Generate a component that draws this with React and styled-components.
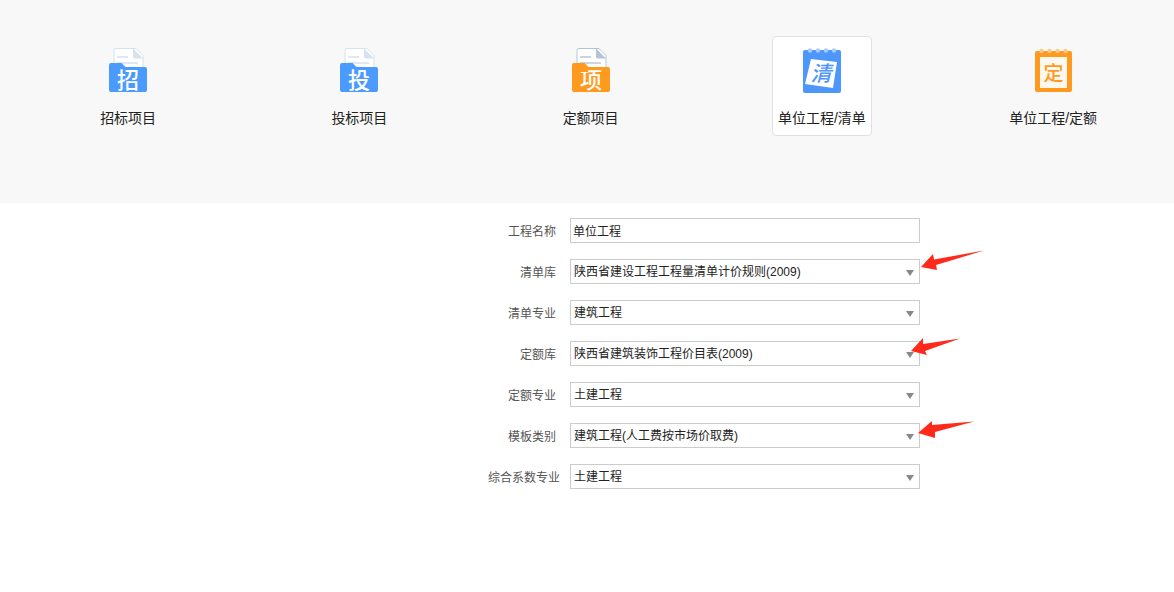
import React from 'react';
import styled, { createGlobalStyle } from 'styled-components';

const FONT = '"Liberation Sans", "Noto Sans CJK SC", sans-serif';

const GlobalStyle = createGlobalStyle`
  html, body {
    margin: 0;
    padding: 0;
    background: #fff;
    font-family: ${FONT};
  }
`;

const TYPES = [
  { label: '招标项目', icon: 'folder', char: '招', color: '#4b9bff', line: '#dfe8f3', corner: '#d5e2f0' },
  { label: '投标项目', icon: 'folder', char: '投', color: '#4b9bff', line: '#dfe8f3', corner: '#d5e2f0' },
  { label: '定额项目', icon: 'folder', char: '项', color: '#ff9a1f', line: '#cbd5df', corner: '#b4c4d4' },
  { label: '单位工程/清单', icon: 'listBook', char: '清', active: true },
  { label: '单位工程/定额', icon: 'quotaBook', char: '定' },
];

const FIELDS = [
  { label: '工程名称', value: '单位工程', input: true },
  { label: '清单库', value: '陕西省建设工程工程量清单计价规则(2009)', arrow: 'first' },
  { label: '清单专业', value: '建筑工程' },
  { label: '定额库', value: '陕西省建筑装饰工程价目表(2009)', arrow: 'second' },
  { label: '定额专业', value: '土建工程' },
  { label: '模板类别', value: '建筑工程(人工费按市场价取费)', arrow: 'third' },
  { label: '综合系数专业', value: '土建工程', wide: true },
];

const ARROWS = {
  first: { x: 349, y: -10, w: 64, h: 22, points: '2,18 14,5 15,10.5 65,1.500 17,16 18,21' },
  second: { x: 339, y: -4, w: 52, h: 20, points: '2,14 14,1 14,7 51,1.500 16,14 18,18' },
  third: { x: 346, y: -4, w: 58, h: 20, points: '2,14 16,2 16,6 58,2.500 19,13 19,19' },
};

const FolderIcon = ({ char, color, line, corner }) => (
  <svg width="40" height="44" viewBox="0 0 40 44">
    <path d="M6 2.5a2 2 0 0 1 2-2h20l7 7v20H6z" fill="#fff" stroke={corner} />
    <path d="M25 .5l10 10h-8a2 2 0 0 1-2-2z" fill={corner} />
    <rect x="9" y="8" width="11" height="2" fill={line} />
    <rect x="9" y="14" width="21" height="2" fill={line} />
    <path d="M1 17a2 2 0 0 1 2-2h10.500l4 4H37a2 2 0 0 1 2 2v21a2 2 0 0 1-2 2H3a2 2 0 0 1-2-2z" fill={color} />
    <text x="20" y="39.500" textAnchor="middle" fontSize="22" fontWeight="500" fill="#fff" fontFamily="Noto Sans CJK SC">
      {char}
    </text>
  </svg>
);

const ListBookIcon = ({ char }) => (
  <svg width="40" height="45" viewBox="0 0 40 45">
    <rect x="1" y="2" width="38" height="43" rx="2" fill="#4d96fb" />
    {[7, 15, 23, 31].map(cx => (
      <circle key={cx} cx={cx + 1} cy="2.500" r="2.200" fill="#a9ccfb" />
    ))}
    <path d="M9 11l26 3-4 26-28-4z" fill="#fff" />
    <text
      x="19"
      y="33"
      textAnchor="middle"
      fontSize="21"
      fontWeight="500"
      fontStyle="italic"
      fill="#4d96fb"
      fontFamily="Noto Sans CJK SC"
    >
      {char}
    </text>
  </svg>
);

const QuotaBookIcon = ({ char }) => (
  <svg width="40" height="45" viewBox="0 0 40 45">
    <rect x="2" y="3" width="37" height="41" rx="2" fill="#ff9a1f" />
    {[7, 15, 23, 31].map(cx => (
      <circle key={cx} cx={cx + 1.5} cy="3" r="2.200" fill="#fcc98a" />
    ))}
    <rect x="7" y="9" width="27" height="31" fill="#fff8ee" />
    <text x="20.500" y="33" textAnchor="middle" fontSize="20" fontWeight="500" fill="#ff9a1f" fontFamily="Noto Sans CJK SC">
      {char}
    </text>
  </svg>
);

const TypeIcon = ({ type }) => {
  if (type.icon === 'folder') {
    return <FolderIcon char={type.char} color={type.color} line={type.line} corner={type.corner} />;
  }
  if (type.icon === 'listBook') {
    return <ListBookIcon char={type.char} />;
  }
  return <QuotaBookIcon char={type.char} />;
};

const RedArrow = ({ name }) => {
  const arrow = ARROWS[name];
  return (
    <ArrowSvg $x={arrow.x} $y={arrow.y} width={arrow.w} height={arrow.h} viewBox={`0 0 ${arrow.w} ${arrow.h}`}>
      <polygon points={arrow.points} fill="#ff2a1a" />
    </ArrowSvg>
  );
};

const App = () => {
  return (
    <>
      <GlobalStyle />
      <TypeBar>
        {TYPES.map(type => (
          <TypeColumn key={type.label}>
            <TypeCard $active={type.active}>
              <IconSlot>
                <TypeIcon type={type} />
              </IconSlot>
              <TypeLabel>{type.label}</TypeLabel>
            </TypeCard>
          </TypeColumn>
        ))}
      </TypeBar>
      <Form>
        {FIELDS.map(field => (
          <Row key={field.label}>
            <Label $wide={field.wide}>{field.label}</Label>
            <Control>
              {field.input ? (
                <TextInput defaultValue={field.value} />
              ) : (
                <>
                  <Select defaultValue={field.value}>
                    <option>{field.value}</option>
                  </Select>
                  <Caret />
                </>
              )}
              {field.arrow && <RedArrow name={field.arrow} />}
            </Control>
          </Row>
        ))}
      </Form>
    </>
  );
};

const TypeBar = styled.div`
  height: 203px;
  box-sizing: border-box;
  padding: 36px 0 0 12.5px;
  background: #f8f8f8;
  display: grid;
  grid-template-columns: repeat(5, 231.25px);
  align-items: start;
`;

const TypeColumn = styled.div`
  display: flex;
  justify-content: center;
`;

const TypeCard = styled.div`
  width: 100px;
  height: 100px;
  box-sizing: border-box;
  display: flex;
  flex-direction: column;
  align-items: center;
  border: 1px solid ${props => (props.$active ? '#dde2e8' : 'transparent')};
  border-radius: 4px;
  background: ${props => (props.$active ? '#fff' : 'transparent')};
`;

const IconSlot = styled.div`
  height: 45px;
  margin-top: 11px;
  display: flex;
`;

const TypeLabel = styled.div`
  margin-top: 15px;
  font-size: 14px;
  line-height: 20px;
  color: #222;
  white-space: nowrap;
`;

const Form = styled.div`
  padding-top: 15px;
  display: flex;
  flex-direction: column;
  gap: 16px;
`;

const Row = styled.div`
  display: grid;
  grid-template-columns: 556px 350px;
  column-gap: 14px;
  align-items: center;
  height: 25px;
`;

const Label = styled.label`
  text-align: right;
  font-size: 12px;
  color: #555;
  margin-right: ${props => (props.$wide ? '-4px' : '0')};
`;

const Control = styled.div`
  position: relative;
  height: 25px;
`;

const TextInput = styled.input`
  width: 100%;
  height: 100%;
  box-sizing: border-box;
  margin: 0;
  padding: 0 2px;
  border: 1px solid #ccc;
  outline: none;
  background: #fff;
  font: 12px ${FONT};
  color: #222;
`;

const Select = styled.select`
  width: 100%;
  height: 100%;
  box-sizing: border-box;
  margin: 0;
  padding: 0 3px;
  border: 1px solid #ccc;
  border-radius: 0;
  outline: none;
  appearance: none;
  background: #fff;
  font: 12px ${FONT};
  color: #222;
`;

const Caret = styled.span`
  position: absolute;
  right: 6px;
  top: 11px;
  width: 0;
  height: 0;
  border-left: 4.5px solid transparent;
  border-right: 4.5px solid transparent;
  border-top: 6px solid #888;
  pointer-events: none;
`;

const ArrowSvg = styled.svg`
  position: absolute;
  left: ${props => props.$x}px;
  top: ${props => props.$y}px;
  overflow: visible;
  pointer-events: none;
`;

export default App;
